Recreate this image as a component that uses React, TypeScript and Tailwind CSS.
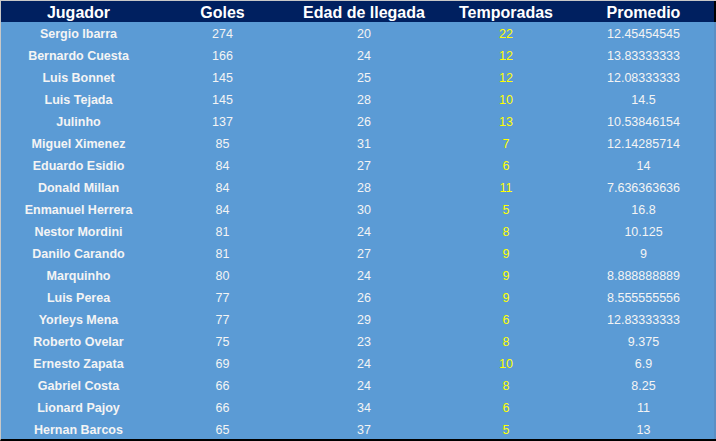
import React from "react";

const rows: [string, number, number, number, string][] = [
  ["Sergio Ibarra", 274, 20, 22, "12.45454545"],
  ["Bernardo Cuesta", 166, 24, 12, "13.83333333"],
  ["Luis Bonnet", 145, 25, 12, "12.08333333"],
  ["Luis Tejada", 145, 28, 10, "14.5"],
  ["Julinho", 137, 26, 13, "10.53846154"],
  ["Miguel Ximenez", 85, 31, 7, "12.14285714"],
  ["Eduardo Esidio", 84, 27, 6, "14"],
  ["Donald Millan", 84, 28, 11, "7.636363636"],
  ["Enmanuel Herrera", 84, 30, 5, "16.8"],
  ["Nestor Mordini", 81, 24, 8, "10.125"],
  ["Danilo Carando", 81, 27, 9, "9"],
  ["Marquinho", 80, 24, 9, "8.888888889"],
  ["Luis Perea", 77, 26, 9, "8.555555556"],
  ["Yorleys Mena", 77, 29, 6, "12.83333333"],
  ["Roberto Ovelar", 75, 23, 8, "9.375"],
  ["Ernesto Zapata", 69, 24, 10, "6.9"],
  ["Gabriel Costa", 66, 24, 8, "8.25"],
  ["Lionard Pajoy", 66, 34, 6, "11"],
  ["Hernan Barcos", 65, 37, 5, "13"],
];

const font = { fontFamily: '"Liberation Sans", Arial, sans-serif' };

export default function App() {
  return (
    <div
      className="w-[716px] h-[441px] flex flex-col border-t border-l border-[#c8c8c8] border-b-2 border-b-black bg-[#5b9bd5]"
      style={font}
    >
      <div className="h-[21px] shrink-0 flex items-center pt-[2px] leading-[18px] bg-[#002060] text-white font-bold text-[16px] border-r-2 border-black">
        <div className="w-[155px] text-center">Jugador</div>
        <div className="w-[133px] text-center">Goles</div>
        <div className="w-[150px] text-center">Edad de llegada</div>
        <div className="w-[134px] text-center">Temporadas</div>
        <div className="flex-1 text-center">Promedio</div>
      </div>
      <div className="flex-1 min-h-0 flex flex-col border-r-2 border-[#5a8fc4]">
        {rows.map((r) => (
          <div
            key={r[0]}
            className="flex-1 min-h-0 flex items-center pt-[3px] leading-[16px] text-[#f4f4f4] text-[12.5px]"
          >
            <div className="w-[155px] text-center font-bold">{r[0]}</div>
            <div className="w-[133px] text-center">{r[1]}</div>
            <div className="w-[150px] text-center">{r[2]}</div>
            <div className="w-[134px] text-center text-[#ffff00]">{r[3]}</div>
            <div className="flex-1 text-center">{r[4]}</div>
          </div>
        ))}
      </div>
    </div>
  );
}
